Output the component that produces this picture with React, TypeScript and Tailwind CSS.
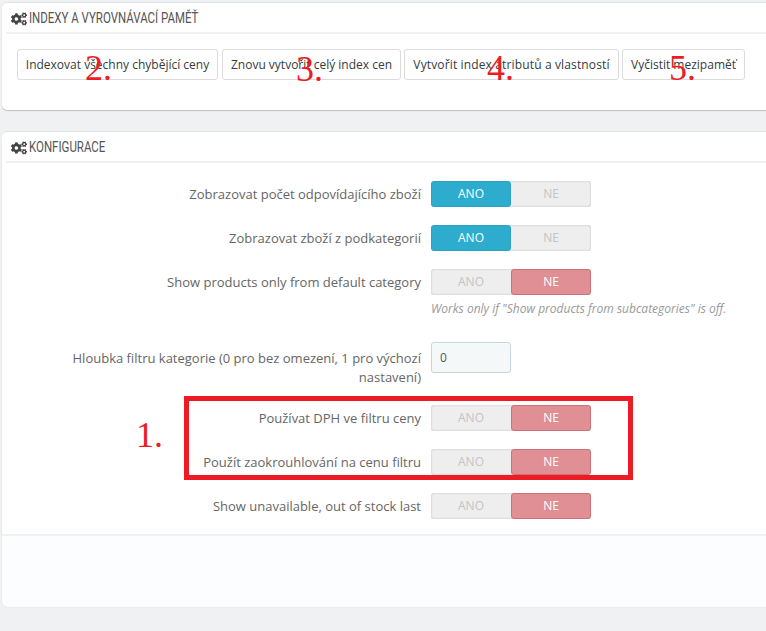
import { FaCogs } from 'react-icons/fa'

function Heading({ title }: { title: string }) {
  return (
    <div className="ml-1 flex h-[31px] items-center gap-[2px] border-b-2 border-[#eff1f2] pt-[2px] pl-[5px] font-['Roboto',sans-serif] text-[15px] text-[#555555] uppercase">
      <FaCogs className="h-[16px] w-[16px] text-[#444444]" />
      <span className="origin-left scale-x-[0.765] whitespace-nowrap">{title}</span>
    </div>
  )
}

function Switch({ on }: { on: boolean }) {
  return (
    <div className="flex h-[26px] w-[160px] rounded-[3px] bg-[#eeeeee] text-[12px] leading-[26px] shadow-[inset_0_0_2px_rgba(0,0,0,0.25)]">
      <div
        className={
          on
            ? 'w-[80px] rounded-[3px] border border-[#2aa3c6] bg-[#2eacce] text-center leading-[24px] text-white'
            : 'w-[80px] text-center text-[#c4c4c4]'
        }
      >
        ANO
      </div>
      <div
        className={
          on
            ? 'w-[80px] text-center text-[#c4c4c4]'
            : 'w-[80px] rounded-[3px] border border-[#cd7176] bg-[#e08f95] text-center leading-[24px] text-white'
        }
      >
        NE
      </div>
    </div>
  )
}

function Row({ label, on, className }: { label: string; on: boolean; className: string }) {
  return (
    <div className={`flex items-center ${className}`}>
      <div className="w-[429px] pt-[2px] pr-[10px] text-right">{label}</div>
      <Switch on={on} />
    </div>
  )
}

function Marker({ text, className }: { text: string; className: string }) {
  return (
    <span className={`pointer-events-none absolute font-['Liberation_Serif',serif] text-[36px] leading-none text-[#ed1c24] ${className}`}>
      {text}
    </span>
  )
}

const buttons = [
  { text: 'Indexovat všechny chybějící ceny', width: 'w-[201px]' },
  { text: 'Znovu vytvořit celý index cen', width: 'ml-[1px] w-[179px]' },
  { text: 'Vytvořit index atributů a vlastností', width: 'w-[215px] tracking-[0.14px]' },
  { text: 'Vyčistit mezipaměť', width: 'w-[123px]' },
]

export default function App() {
  return (
    <div className="relative h-[631px] w-[766px] overflow-hidden bg-[#eff1f2] pt-[2px] pl-[2px] font-['Open_Sans',sans-serif] text-[13px] text-[#666666]">
      <div className="h-[108px] w-[800px] rounded-[5px] border-t border-[#dfe2e4] bg-white shadow-[0_1px_1px_rgba(0,0,0,0.2)]">
        <Heading title="Indexy a vyrovnávací paměť" />
        <div className="mt-[15px] ml-[15px] flex gap-[3px] text-[12px] text-[#363a41]">
          {buttons.map((b) => (
            <div key={b.text} className={`flex h-[31px] items-center justify-center rounded-[3px] border border-[#dcdcdc] bg-white pt-[1px] whitespace-nowrap ${b.width}`}>
              {b.text}
            </div>
          ))}
        </div>
      </div>

      <div className="mt-[21px] h-[475px] w-[800px] rounded-[5px] border-t border-[#dfe2e4] bg-white shadow-[0_1px_1px_rgba(0,0,0,0.2)]">
        <Heading title="Konfigurace" />
        <Row label="Zobrazovat počet odpovídajícího zboží" on className="mt-[18px]" />
        <Row label="Zobrazovat zboží z podkategorií" on className="mt-[18px]" />
        <Row label="Show products only from default category" on={false} className="mt-[18px]" />
        <div className="mt-[6px] ml-[429px] text-[12px] leading-[16px] text-[#999999] italic">
          Works only if "Show products from subcategories" is off.
        </div>
        <div className="mt-[25px] flex h-[31px]">
          <div className="ml-[50px] w-[379px] pt-[7px] pr-[10px] text-right leading-[19px]">
            Hloubka filtru kategorie (0 pro bez omezení, 1 pro výchozí nastavení)
          </div>
          <div className="flex h-[31px] w-[80px] items-center rounded-[3px] border border-[#c7d6db] bg-[#f5f8f9] px-[8px] text-[12px] text-[#555555]">
            0
          </div>
        </div>
        <Row label="Používat DPH ve filtru ceny" on={false} className="mt-[32px]" />
        <Row label="Použít zaokrouhlování na cenu filtru" on={false} className="mt-[18px]" />
        <Row label="Show unavailable, out of stock last" on={false} className="mt-[18px]" />
        <div className="mt-[15px] h-[73px] rounded-b-[5px] border-t-2 border-[#eff1f2] bg-[#fcfdfe]" />
      </div>

      <div className="pointer-events-none absolute top-[396px] left-[184px] h-[84px] w-[449px] border-[5px] border-[#ed1c24]" />
      <Marker text="1." className="top-[417px] left-[136px]" />
      <Marker text="2." className="top-[50px] left-[85px]" />
      <Marker text="3." className="top-[51px] left-[296px]" />
      <Marker text="4." className="top-[50px] left-[487px]" />
      <Marker text="5." className="top-[50px] left-[669px]" />
    </div>
  )
}
